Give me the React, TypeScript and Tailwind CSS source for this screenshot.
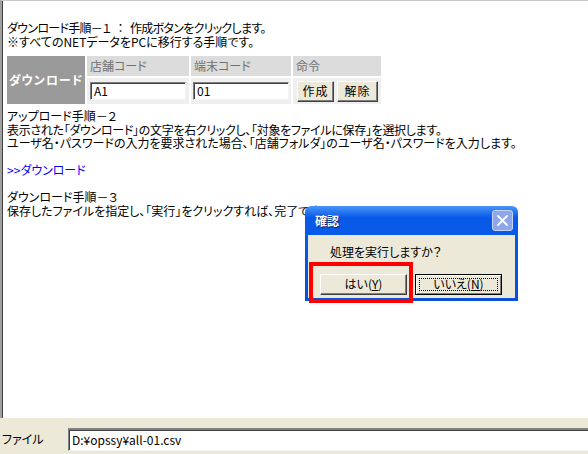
import React from 'react';

const font = "font-['Noto_Sans_CJK_JP',sans-serif]";

function XpButton({ children, focused = false, className = '' }: { children: React.ReactNode; focused?: boolean; className?: string }) {
  return (
    <div
      className={`flex items-center justify-center bg-[#ece9d8] ${
        focused
          ? 'border border-black shadow-[inset_1px_1px_0_#fff,inset_-1px_-1px_0_#808080]'
          : 'border border-t-white border-l-white border-r-[#404040] border-b-[#404040] shadow-[inset_-1px_-1px_0_#808080]'
      } ${className}`}
    >
      {focused ? (
        <span className="flex items-center justify-center w-[calc(100%-6px)] h-[calc(100%-6px)] border border-dotted border-black">
          {children}
        </span>
      ) : (
        children
      )}
    </div>
  );
}

function Field({ value, className = '' }: { value: string; className?: string }) {
  return (
    <div
      className={`bg-white border border-t-[#808080] border-l-[#808080] border-r-[#f4f4f4] border-b-[#f4f4f4] shadow-[inset_1px_1px_0_#404040] pl-[3px] flex items-center text-[12px] text-black ${className}`}
    >
      {value}
    </div>
  );
}

export default function App() {
  return (
    <div className={`relative w-[588px] h-[454px] flex flex-col bg-[#ece9d8] overflow-hidden ${font} [font-feature-settings:'palt'] text-[12px] leading-[13.5px] text-black`}>
      {/* main page */}
      <div className="h-[418px] bg-white border-t border-t-[#c8c8c8] border-l-2 border-l-[#a0a0a0] shadow-[inset_1px_0_0_#404040] pl-[5px] pt-[20px]">
        <p className="tracking-[-0.7px]">
          ダウンロード手順－１<span className="mx-[7px]">：</span>作成ボタンをクリックします。
        </p>
        <p>※すべてのNETデータをPCに移行する手順です。</p>

        <div className="mt-[8px] grid grid-cols-[78px_102px_100px_88px] grid-rows-[20px_26px] gap-[2px]">
          <div className="row-span-2 bg-[#9a9a9a] flex items-center justify-center text-white font-bold text-[12px] tracking-[1px]">
            ダウンロード
          </div>
          <div className="bg-[#dcdcdc] text-[#707070] flex items-center pl-[3px]">店舗コード</div>
          <div className="bg-[#dcdcdc] text-[#707070] flex items-center pl-[3px]">端末コード</div>
          <div className="bg-[#dcdcdc] text-[#707070] flex items-center pl-[3px]">命令</div>
          <div className="bg-[#efefef] flex items-center pl-[3px]">
            <Field value="A1" className="w-[96px] h-[18px]" />
          </div>
          <div className="bg-[#efefef] flex items-center pl-[2px]">
            <Field value="01" className="w-[96px] h-[18px]" />
          </div>
          <div className="bg-[#efefef] flex items-center pl-[4px] gap-[3px] text-[12px] tracking-[1px]">
            <XpButton className="w-[37px] h-[21px]">作成</XpButton>
            <XpButton className="w-[41px] h-[21px]">解除</XpButton>
          </div>
        </div>

        <div className="mt-[5px]">
          <p>アップロード手順－２</p>
          <p className="tracking-[-0.3px]">表示された「ダウンロード」の文字を右クリックし、「対象をファイルに保存」を選択します。</p>
          <p>ユーザ名・パスワードの入力を要求された場合、「店舗フォルダ」のユーザ名・パスワードを入力します。</p>
          <p>&nbsp;</p>
          <p className="text-[#0000ff]">&gt;&gt;ダウンロード</p>
          <p>&nbsp;</p>
          <p>ダウンロード手順－３</p>
          <p>保存したファイルを指定し、「実行」をクリックすれば、完了です。</p>
        </div>
      </div>

      {/* file row */}
      <div className="h-[10px] bg-[#ece9d8]" />
      <div className="flex-1 flex items-start bg-[#ece9d8]">
        <span className="w-[68px] pl-[2px] pt-[4px] text-[12px]">ファイル</span>
        <Field value="D:¥opssy¥all-01.csv" className="flex-1 h-[23px] -mr-[4px] border-t-2" />
      </div>

      {/* confirm dialog */}
      <div className="absolute left-[305px] top-[206px] w-[213px] h-[95px] flex flex-col rounded-t-[6px] bg-[#0a50d8] px-[3px] pb-[3px] bg-[linear-gradient(to_bottom,#4a95fa,#0a5ae8_12%,#0457e6_60%,#0a4fd8)]">
        <div className="h-[29px] flex items-center justify-between pl-[7px] pr-[2px]">
          <span className="text-white font-bold text-[12px] [text-shadow:1px_1px_0_#0a246a]">確認</span>
          <div className="w-[21px] h-[21px] rounded-[3px] border border-[#c8d4f4] bg-[#8ea6ea] flex items-center justify-center">
            <svg width="13" height="13" viewBox="0 0 13 13">
              <path d="M2 2 L11 11 M11 2 L2 11" stroke="#ffffff" strokeWidth="1.8" strokeLinecap="round" />
            </svg>
          </div>
        </div>
        <div className="flex-1 bg-[#ece9d8] pt-[10px]">
          <p className="pl-[22px]">処理を実行しますか？</p>
          <div className="mt-[15px] flex pl-[12px] gap-[8px]">
            <XpButton className="w-[87px] h-[21px]">
              <span>
                はい(<span className="underline">Y</span>)
              </span>
            </XpButton>
            <XpButton focused className="w-[87px] h-[21px]">
              <span>
                いいえ(<span className="underline">N</span>)
              </span>
            </XpButton>
          </div>
        </div>
      </div>

      {/* red highlight */}
      <div className="absolute left-[309px] top-[262px] w-[104px] h-[41px] border-4 border-[#ff0000]" />
    </div>
  );
}
